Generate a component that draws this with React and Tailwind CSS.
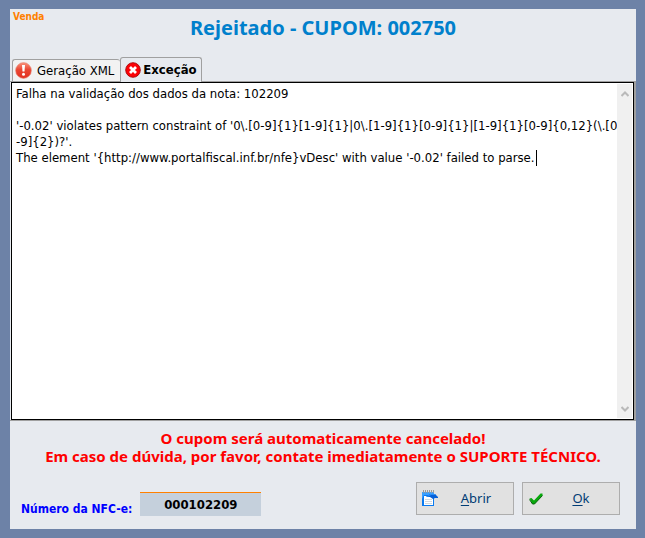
import { useState } from "react";

const tabs = [
  { id: "xml", label: "Geração XML" },
  { id: "excecao", label: "Exceção" },
];

const message = `Falha na validação dos dados da nota: 102209

'-0.02' violates pattern constraint of '0\\.[0-9]{1}[1-9]{1}|0\\.[1-9]{1}[0-9]{1}|[1-9]{1}[0-9]{0,12}(\\.[0
-9]{2})?'.
The element '{http://www.portalfiscal.inf.br/nfe}vDesc' with value '-0.02' failed to parse.`;

function AlertIcon() {
  return (
    <svg width="17" height="17" viewBox="0 0 17 17" aria-hidden="true">
      <defs>
        <linearGradient id="alert" x1="0" y1="0" x2="0" y2="1">
          <stop offset="0" stopColor="#f8937b" />
          <stop offset="0.45" stopColor="#ea4632" />
          <stop offset="1" stopColor="#e23222" />
        </linearGradient>
      </defs>
      <circle cx="8.5" cy="8.5" r="7.9" fill="url(#alert)" stroke="#e89080" strokeWidth="0.6" />
      <path d="M7 3h3l-.5 6.5h-2z" fill="#fff" />
      <circle cx="8.5" cy="12.2" r="1.5" fill="#fff" />
    </svg>
  );
}

function ErrorIcon() {
  return (
    <svg width="16" height="16" viewBox="0 0 16 16" aria-hidden="true">
      <circle cx="8" cy="8" r="7.3" fill="#fb0207" stroke="#a80508" strokeWidth="0.9" />
      <path d="M5 5l6 6M11 5l-6 6" stroke="#fff" strokeWidth="2.8" />
    </svg>
  );
}

function NotepadIcon() {
  return (
    <svg width="17" height="17" viewBox="0 0 17 17" aria-hidden="true">
      <path d="M0 2h12v14H0z" fill="#0a7af0" />
      <path d="M0 2h12v3H2L0 9z" fill="#3aa0ff" />
      <path d="M2 6h9v9H2z" fill="#fff" />
      <path d="M3 9.5h7M3 11.5h7M3 13.5h7" stroke="#d3d9df" />
      <path d="M1.5 0v3M3.5 0v3M5.5 0v3M7.5 0v3M9.5 0v3M11.5 0v3" stroke="#9a9a9a" />
      <path d="M4 7l4-3h5l3 3v1h-3l-2 1-3-2z" fill="#0560d8" />
      <path d="M4 7l4-3h5l1 1H9L6 7z" fill="#2b8df5" />
    </svg>
  );
}

function CheckIcon() {
  return (
    <svg width="14" height="14" viewBox="0 0 14 14" aria-hidden="true">
      <path d="M.5 6.5l2-.5 2.5 2.5L11.5 1.5h2v2L5.5 12h-2z" fill="#08a80c" />
      <path d="M.5 7.5l3 4.5h2l8-8.5" fill="none" stroke="#04630a" />
    </svg>
  );
}

function ScrollArrow({ label, up }) {
  return (
    <button type="button" aria-label={label} className="flex h-5 items-center justify-center">
      <svg width="8" height="7" viewBox="0 0 8 7" aria-hidden="true">
        <path d={up ? "M.5 5L4 1.5 7.5 5" : "M.5 2L4 5.5 7.5 2"} fill="none" stroke="#b9b9b9" strokeWidth="2" />
      </svg>
    </button>
  );
}

export default function App() {
  const [active, setActive] = useState("excecao");
  const [text, setText] = useState(message);

  return (
    <div className="flex min-h-screen bg-[#6d82a7] py-[9px] pr-[9px] pl-[10px] font-['DejaVu_Sans_Condensed','DejaVu_Sans',sans-serif] text-black">
      <main className="flex flex-1 flex-col bg-[#e7eaef]">
        <header>
          <p className="h-[7px] px-[3px] pt-[2px] text-[10px] leading-3 font-bold text-[#ff8000]">Venda</p>
          <h1 className="text-center font-['Noto_Sans',sans-serif] text-[20px] leading-6 font-bold text-[#0080cc]">
            Rejeitado - CUPOM: 002750
          </h1>
        </header>

        <div role="tablist" className="mt-[17px] flex items-end border-b border-[#a0a0a0] px-[2px]">
          {tabs.map((t) => (
            <button
              key={t.id}
              type="button"
              role="tab"
              aria-selected={active === t.id}
              onClick={() => setActive(t.id)}
              className={
                active === t.id
                  ? "-mb-px flex h-[25px] items-center gap-[2px] rounded-t-[3px] border border-b-0 border-[#a0a0a0] bg-[#e7eaef] px-1 text-[13px] font-bold"
                  : "flex h-[22px] items-center gap-[5px] rounded-t-[3px] border border-r-0 border-b-0 border-[#a0a0a0] bg-[#f2f2f2] pr-[6px] pl-[2px] text-[13px]"
              }
            >
              {t.id === "xml" ? <AlertIcon /> : <ErrorIcon />}
              {t.label}
            </button>
          ))}
        </div>

        <div className="flex min-h-[339px] flex-1 border-r-2 border-b border-[#a0a0a0] pl-px">
          <div className="relative flex flex-1 border border-black bg-white p-px">
            <textarea
              aria-label="Exceção"
              spellCheck={false}
              value={text}
              onChange={(e) => setText(e.target.value)}
              className="min-w-0 flex-1 resize-none overflow-hidden bg-white px-[3px] pt-[2px] text-[13px] leading-4 whitespace-pre outline-none"
            />
            <span aria-hidden="true" className="absolute top-[67px] left-[524px] h-4 w-px bg-black" />
            <div className="flex w-[15px] flex-col justify-between bg-[#f0f0f0]">
              <ScrollArrow label="Rolar para cima" up />
              <ScrollArrow label="Rolar para baixo" />
            </div>
          </div>
        </div>

        <div className="pt-2 text-center font-['Noto_Sans',sans-serif] text-[15px] leading-[18px] font-bold text-[#ff0000]">
          <p>O cupom será automaticamente cancelado!</p>
          <p>Em caso de dúvida, por favor, contate imediatamente o SUPORTE TÉCNICO.</p>
        </div>

        <footer className="flex items-start pt-[17px] pr-4 pb-3 pl-[11px]">
          <label htmlFor="nfce" className="mt-[19px] text-[12px] leading-4 font-bold text-[#0000ff]">
            Número da NFC-e:
          </label>
          <input
            id="nfce"
            readOnly
            value="000102209"
            className="mt-[10px] ml-2 h-6 w-[121px] border-t border-[#ff8000] bg-[#c5d0dc] text-center text-[13px] font-bold outline-none"
          />
          <div className="ml-auto flex gap-2 text-[13px] text-[#003c74]">
            <button type="button" className="flex h-[33px] w-[98px] items-center border border-[#adadad] bg-[#e1e1e1] pl-[5px]">
              <NotepadIcon />
              <span className="flex-1 text-center font-['Noto_Sans',sans-serif]">
                <u className="underline-offset-2">A</u>brir
              </span>
            </button>
            <button type="button" className="flex h-[33px] w-[98px] items-center border border-[#adadad] bg-[#e1e1e1] pl-[6px]">
              <CheckIcon />
              <span className="flex-1 text-center font-['Noto_Sans',sans-serif]">
                <u className="underline-offset-2">O</u>k
              </span>
            </button>
          </div>
        </footer>
      </main>
    </div>
  );
}
